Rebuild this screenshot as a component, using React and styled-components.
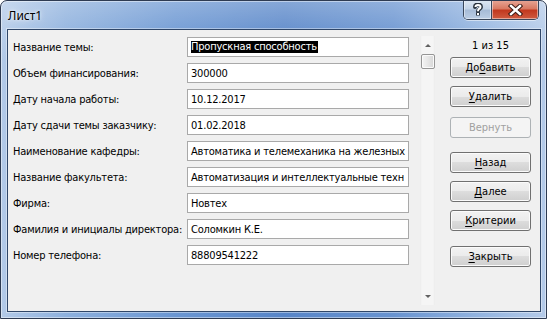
import React from "react";
import styled, { createGlobalStyle } from "styled-components";

const Global = createGlobalStyle`
  html, body { margin: 0; padding: 0; background: #ffffff; }
  body { font-family: "DejaVu Sans Condensed", "DejaVu Sans", sans-serif; font-stretch: condensed; }
`;

const Window = styled.div`
  width: 547px;
  height: 319px;
  box-sizing: border-box;
  display: flex;
  flex-direction: column;
  border: 1px solid #2e3b52;
  border-radius: 7px 7px 0 0;
  background:
    linear-gradient(180deg, rgba(255,255,255,0.28) 0px, rgba(255,255,255,0.12) 26px, rgba(255,255,255,0) 60px),
    linear-gradient(90deg, #b3cae8 0%, #8db0dd 12%, #6a96d2 32%, #5785c8 52%, #6893d0 72%, #93b4e0 88%, #b5cbe9 100%);
  box-shadow: inset 0 0 0 1px rgba(255,255,255,0.45);
  overflow: hidden;
`;

const TitleBar = styled.div`
  height: 28px;
  display: flex;
  align-items: flex-start;
  padding-left: 7px;
  padding-right: 7px;
`;

const Title = styled.div`
  margin-top: 8px;
  font-family: "Noto Sans", "Open Sans", sans-serif;
  font-size: 12px;
  line-height: 14px;
  color: #000;
  text-shadow: 0 0 6px rgba(255,255,255,0.9), 0 0 3px rgba(255,255,255,0.8);
  flex: 1;
`;

const CaptionGroup = styled.div`
  display: flex;
  margin-top: -1px;
  border: 1px solid #3a475b;
  border-top: none;
  border-radius: 0 0 5px 5px;
  overflow: hidden;
  box-shadow: 0 1px 0 rgba(255,255,255,0.5);
`;

const CapButton = styled.div`
  width: ${(p) => p.$w}px;
  height: 19px;
  display: flex;
  align-items: center;
  justify-content: center;
  box-shadow: inset 0 0 0 1px rgba(255,255,255,0.45);
  background: ${(p) =>
    p.$kind === "close"
      ? "linear-gradient(180deg, #e8a898 0%, #d97a63 45%, #c2391f 55%, #cf5b40 100%)"
      : "linear-gradient(180deg, #dfe8f3 0%, #c4d4e8 45%, #a7bcd7 55%, #bccee5 100%)"};
  & + & { border-left: 1px solid #3a475b; }
`;

const Client = styled.div`
  flex: 1;
  margin: 0 5px 6px 6px;
  background: #f0f0f0;
  border: 1px solid #2f4668;
  box-shadow: 0 0 0 1px rgba(255,255,255,0.4);
  display: flex;
  align-items: flex-start;
`;

const Fields = styled.div`
  display: grid;
  grid-template-columns: 174px 222px;
  grid-auto-rows: 20px;
  row-gap: 6px;
  padding: 7px 0 0 5px;
`;

const Label = styled.div`
  font-size: 11px;
  letter-spacing: -0.2px;
  color: #000;
  display: flex;
  align-items: center;
  white-space: nowrap;
`;

const Field = styled.div`
  box-sizing: border-box;
  border: 1px solid #a9a9a9;
  background: #fff;
  font-size: 11px;
  letter-spacing: -0.2px;
  color: #000;
  display: flex;
  align-items: center;
  padding-left: 3px;
  white-space: nowrap;
  overflow: hidden;
`;

const Selected = styled.span`
  background: #000;
  color: #fff;
  line-height: 12px;
  padding: 0 1px 0 0;
`;

const ScrollTrack = styled.div`
  margin: 6px 0 0 11px;
  width: 15px;
  height: 269px;
  box-sizing: border-box;
  background: linear-gradient(90deg, #ececec 0, #f5f5f5 2px, #f5f5f5 13px, #ececec 15px);
  display: flex;
  flex-direction: column;
  align-items: center;
`;

const Arrow = styled.div`
  width: 0;
  height: 0;
  border-left: 3px solid transparent;
  border-right: 3px solid transparent;
  ${(p) => (p.$down ? "border-top: 3px solid #606060;" : "border-bottom: 3px solid #606060;")}
  margin-top: ${(p) => p.$mt}px;
  margin-bottom: ${(p) => p.$mb || 0}px;
`;

const Thumb = styled.div`
  margin-top: 7px;
  width: 14px;
  height: 15px;
  box-sizing: border-box;
  border: 1px solid #959595;
  border-radius: 2px;
  background: linear-gradient(90deg, #f4f4f4 0%, #e6e6e6 50%, #d6d6d6 100%);
  box-shadow: inset 0 0 0 1px #fafafa;
`;

const Filler = styled.div`
  flex: 1;
`;

const Side = styled.div`
  margin-left: 15px;
  width: 81px;
  display: flex;
  flex-direction: column;
`;

const Counter = styled.div`
  margin-top: 8px;
  height: 15px;
  line-height: 15px;
  text-align: center;
  font-size: 11px;
  color: #000;
`;

const Button = styled.div`
  margin-top: ${(p) => p.$mt}px;
  height: 21px;
  box-sizing: border-box;
  border: 1px solid ${(p) => (p.$disabled ? "#adb2b5" : "#707070")};
  border-radius: 3px;
  background: ${(p) =>
    p.$disabled
      ? "#f4f4f4"
      : "linear-gradient(180deg, #f2f2f2 0%, #ebebeb 50%, #dddddd 50%, #cfcfcf 100%)"};
  box-shadow: inset 0 0 0 1px ${(p) => (p.$disabled ? "#f4f4f4" : "#fbfbfb")};
  display: flex;
  align-items: center;
  justify-content: center;
  font-size: 11px;
  color: ${(p) => (p.$disabled ? "#a0a0a0" : "#000")};
`;

const Key = styled.span`
  text-decoration: underline;
  text-underline-offset: 2px;
`;

const fields = [
  ["Название темы:", "Пропускная способность", true],
  ["Объем финансирования:", "300000"],
  ["Дату начала работы:", "10.12.2017"],
  ["Дату сдачи темы заказчику:", "01.02.2018"],
  ["Наименование кафедры:", "Автоматика и телемеханика на железных"],
  ["Название факультета:", "Автоматизация и интеллектуальные техн"],
  ["Фирма:", "Новтех"],
  ["Фамилия и инициалы директора:", "Соломкин К.Е."],
  ["Номер телефона:", "88809541222"],
];

const buttons = [
  { pre: "До", key: "б", post: "авить", mt: 4 },
  { pre: "", key: "У", post: "далить", mt: 8 },
  { pre: "Вернуть", key: "", post: "", mt: 10, disabled: true },
  { pre: "", key: "Н", post: "азад", mt: 14 },
  { pre: "", key: "Д", post: "алее", mt: 8 },
  { pre: "", key: "К", post: "ритерии", mt: 8 },
  { pre: "", key: "З", post: "акрыть", mt: 15 },
];

export default function App() {
  return (
    <>
      <Global />
      <Window>
        <TitleBar>
          <Title>Лист1</Title>
          <CaptionGroup>
            <CapButton $w={27} $kind="help">
              <svg width="10" height="13" viewBox="0 0 10 13">
                <path d="M2 4 Q2 1.5 5 1.5 Q8 1.5 8 4 Q8 5.5 6 6.5 Q5 7 5 8.5" fill="none" stroke="#2b3440" strokeWidth="4" strokeLinecap="round" strokeLinejoin="round" />
                <rect x="3" y="9.5" width="4" height="3" fill="#2b3440" />
                <path d="M2.5 4 Q2.5 2 5 2 Q7.5 2 7.5 4 Q7.5 5.2 5.8 6 Q5 6.6 5 8.2" fill="none" stroke="#fff" strokeWidth="2" />
                <rect x="4" y="10" width="2" height="2" fill="#fff" />
              </svg>
            </CapButton>
            <CapButton $w={46} $kind="close">
              <svg width="15" height="12" viewBox="0 0 15 12">
                <path d="M3 2 L12 10 M12 2 L3 10" stroke="#3a1a14" strokeWidth="4.4" strokeLinecap="square" />
                <path d="M3 2 L12 10 M12 2 L3 10" stroke="#ffffff" strokeWidth="2.4" strokeLinecap="square" />
              </svg>
            </CapButton>
          </CaptionGroup>
        </TitleBar>
        <Client>
          <Fields>
            {fields.map(([label, value, sel]) => (
              <React.Fragment key={label}>
                <Label>{label}</Label>
                <Field>{sel ? <Selected>{value}</Selected> : value}</Field>
              </React.Fragment>
            ))}
          </Fields>
          <ScrollTrack>
            <Arrow $mt={8} />
            <Thumb />
            <Filler />
            <Arrow $down $mt={0} $mb={7} />
          </ScrollTrack>
          <Side>
            <Counter>1 из 15</Counter>
            {buttons.map((b, i) => (
              <Button key={i} $mt={b.mt} $disabled={b.disabled}>
                {b.pre}
                {b.key && <Key>{b.key}</Key>}
                {b.post}
              </Button>
            ))}
          </Side>
        </Client>
      </Window>
    </>
  );
}
